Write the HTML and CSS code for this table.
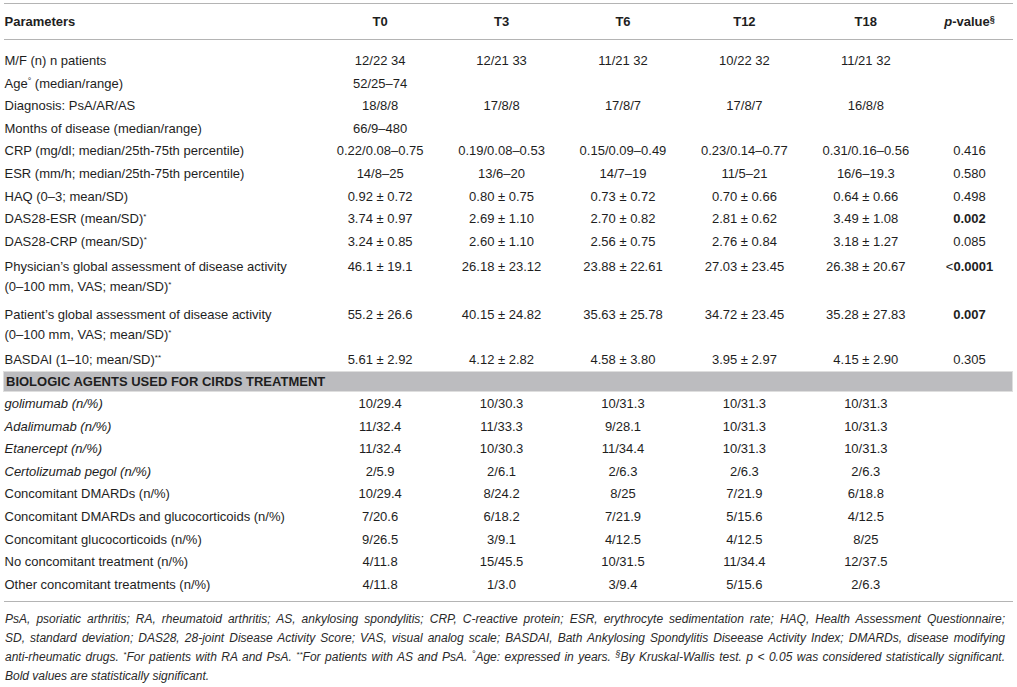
FILE: index.html
```html
<!DOCTYPE html>
<html>
<head>
<meta charset="utf-8">
<link rel="stylesheet" href="styles.css">
</head>
<body>
<div class="page">
<table class="data">
<colgroup>
<col class="c-param"><col class="c-t"><col class="c-t"><col class="c-t"><col class="c-t"><col class="c-t"><col class="c-p">
</colgroup>
<thead>
<tr><th class="left">Parameters</th><th>T0</th><th>T3</th><th>T6</th><th>T12</th><th>T18</th><th><i>p</i>-value<sup class="sect">§</sup></th></tr>
</thead>
<tbody>
<tr class="first"><td class="left">M/F (n) n patients</td><td>12/22 34</td><td>12/21 33</td><td>11/21 32</td><td>10/22 32</td><td>11/21 32</td><td></td></tr>
<tr><td class="left">Age<sup class="deg">°</sup> (median/range)</td><td>52/25–74</td><td></td><td></td><td></td><td></td><td></td></tr>
<tr><td class="left">Diagnosis: PsA/AR/AS</td><td>18/8/8</td><td>17/8/8</td><td>17/8/7</td><td>17/8/7</td><td>16/8/8</td><td></td></tr>
<tr><td class="left">Months of disease (median/range)</td><td>66/9–480</td><td></td><td></td><td></td><td></td><td></td></tr>
<tr><td class="left">CRP (mg/dl; median/25th-75th percentile)</td><td>0.22/0.08–0.75</td><td>0.19/0.08–0.53</td><td>0.15/0.09–0.49</td><td>0.23/0.14–0.77</td><td>0.31/0.16–0.56</td><td>0.416</td></tr>
<tr><td class="left">ESR (mm/h; median/25th-75th percentile)</td><td>14/8–25</td><td>13/6–20</td><td>14/7–19</td><td>11/5–21</td><td>16/6–19.3</td><td>0.580</td></tr>
<tr><td class="left">HAQ (0–3; mean/SD)</td><td>0.92 ± 0.72</td><td>0.80 ± 0.75</td><td>0.73 ± 0.72</td><td>0.70 ± 0.66</td><td>0.64 ± 0.66</td><td>0.498</td></tr>
<tr><td class="left">DAS28-ESR (mean/SD)<sup class="ast">*</sup></td><td>3.74 ± 0.97</td><td>2.69 ± 1.10</td><td>2.70 ± 0.82</td><td>2.81 ± 0.62</td><td>3.49 ± 1.08</td><td><b>0.002</b></td></tr>
<tr><td class="left">DAS28-CRP (mean/SD)<sup class="ast">*</sup></td><td>3.24 ± 0.85</td><td>2.60 ± 1.10</td><td>2.56 ± 0.75</td><td>2.76 ± 0.84</td><td>3.18 ± 1.27</td><td>0.085</td></tr>
<tr class="two"><td class="left">Physician’s global assessment of disease activity<br>(0–100 mm, VAS; mean/SD)<sup class="ast">*</sup></td><td>46.1 ± 19.1</td><td>26.18 ± 23.12</td><td>23.88 ± 22.61</td><td>27.03 ± 23.45</td><td>26.38 ± 20.67</td><td><b><span class="lt">&lt;</span>0.0001</b></td></tr>
<tr class="two"><td class="left">Patient’s global assessment of disease activity<br>(0–100 mm, VAS; mean/SD)<sup class="ast">*</sup></td><td>55.2 ± 26.6</td><td>40.15 ± 24.82</td><td>35.63 ± 25.78</td><td>34.72 ± 23.45</td><td>35.28 ± 27.83</td><td><b>0.007</b></td></tr>
<tr><td class="left">BASDAI (1–10; mean/SD)<sup class="ast">**</sup></td><td>5.61 ± 2.92</td><td>4.12 ± 2.82</td><td>4.58 ± 3.80</td><td>3.95 ± 2.97</td><td>4.15 ± 2.90</td><td>0.305</td></tr>
<tr class="band"><td class="left" colspan="7">BIOLOGIC AGENTS USED FOR CIRDS TREATMENT</td></tr>
<tr><td class="left"><i>golimumab (n/%)</i></td><td>10/29.4</td><td>10/30.3</td><td>10/31.3</td><td>10/31.3</td><td>10/31.3</td><td></td></tr>
<tr><td class="left"><i>Adalimumab (n/%)</i></td><td>11/32.4</td><td>11/33.3</td><td>9/28.1</td><td>10/31.3</td><td>10/31.3</td><td></td></tr>
<tr><td class="left"><i>Etanercept (n/%)</i></td><td>11/32.4</td><td>10/30.3</td><td>11/34.4</td><td>10/31.3</td><td>10/31.3</td><td></td></tr>
<tr><td class="left"><i>Certolizumab pegol (n/%)</i></td><td>2/5.9</td><td>2/6.1</td><td>2/6.3</td><td>2/6.3</td><td>2/6.3</td><td></td></tr>
<tr><td class="left">Concomitant DMARDs (n/%)</td><td>10/29.4</td><td>8/24.2</td><td>8/25</td><td>7/21.9</td><td>6/18.8</td><td></td></tr>
<tr><td class="left">Concomitant DMARDs and glucocorticoids (n/%)</td><td>7/20.6</td><td>6/18.2</td><td>7/21.9</td><td>5/15.6</td><td>4/12.5</td><td></td></tr>
<tr><td class="left">Concomitant glucocorticoids (n/%)</td><td>9/26.5</td><td>3/9.1</td><td>4/12.5</td><td>4/12.5</td><td>8/25</td><td></td></tr>
<tr><td class="left">No concomitant treatment (n/%)</td><td>4/11.8</td><td>15/45.5</td><td>10/31.5</td><td>11/34.4</td><td>12/37.5</td><td></td></tr>
<tr class="last"><td class="left">Other concomitant treatments (n/%)</td><td>4/11.8</td><td>1/3.0</td><td>3/9.4</td><td>5/15.6</td><td>2/6.3</td><td></td></tr>
</tbody>
</table>
<div class="notes">
<span class="line">PsA, psoriatic arthritis; RA, rheumatoid arthritis; AS, ankylosing spondylitis; CRP, C-reactive protein; ESR, erythrocyte sedimentation rate; HAQ, Health Assessment Questionnaire;</span>
<span class="line">SD, standard deviation; DAS28, 28-joint Disease Activity Score; VAS, visual analog scale; BASDAI, Bath Ankylosing Spondylitis Diseease Activity Index; DMARDs, disease modifying</span>
<span class="line">anti-rheumatic drugs. <sup class="ast">*</sup>For patients with RA and PsA. <sup class="ast">**</sup>For patients with AS and PsA. <sup class="deg">°</sup>Age: expressed in years. <sup class="sect">§</sup>By Kruskal-Wallis test. p &lt; 0.05 was considered statistically significant.</span>
<span class="line lastline">Bold values are statistically significant.</span>
</div>
</div>
</body>
</html>
```
FILE: styles.css
```css
html, body {
  margin: 0;
  padding: 0;
  background: #ffffff;
}
body {
  font-family: "Liberation Sans", Arial, sans-serif;
  color: #1e1e1e;
}
.page {
  padding: 3px 4px 0 3px;
}
.data {
  width: 1010px;
  border-collapse: collapse;
  font-size: 13px;
  line-height: 15px;
}
.c-param { width: 316px; }
.c-t { width: 121.5px; }
.c-p { width: 86px; }
.data th {
  font-weight: bold;
  text-align: center;
  padding: 10px 0 10px;
  border-top: 1px solid #b4b4b4;
  border-bottom: 1px solid #b4b4b4;
  white-space: nowrap;
}
.data td {
  text-align: center;
  padding: 3.8px 0;
  white-space: nowrap;
  vertical-align: top;
}
.data .left {
  text-align: left;
  padding-left: 1px;
}
.data tr.first td {
  padding-top: 13px;
}
.data tr.two td {
  padding-top: 4px;
  padding-bottom: 4px;
  line-height: 20px;
}
.data tr.last td {
  padding-bottom: 9px;
  border-bottom: 1px solid #b4b4b4;
}
.data tr.band td {
  background: #bcbcbf;
  border: 1px solid #dedede;
  font-weight: bold;
  padding: 2px 0 2px 2px;
  line-height: 15px;
}
sup {
  line-height: 0;
  vertical-align: 0.45em;
}
.ast { font-size: 8px; }
.deg { font-size: 9px; }
.sect { font-size: 9px; }
.lt { font-weight: normal; }
.notes {
  width: 1000px;
  padding: 8px 0 0 2px;
  font-style: italic;
  font-size: 12px;
  line-height: 19px;
  color: #2a2a2a;
}
.notes .line {
  display: block;
  text-align: justify;
  text-align-last: justify;
  white-space: nowrap;
}
.notes .lastline {
  text-align-last: left;
}
```
